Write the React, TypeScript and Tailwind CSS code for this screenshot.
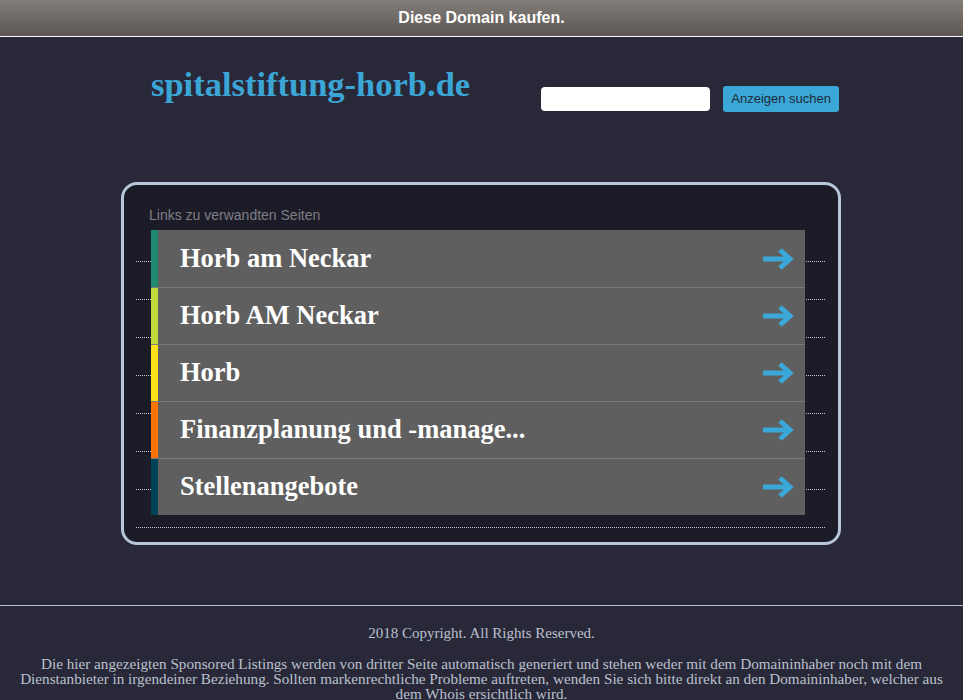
const links = [
  { label: 'Horb am Neckar', color: 'bg-[#1f8a70]' },
  { label: 'Horb AM Neckar', color: 'bg-[#bedb39]' },
  { label: 'Horb', color: 'bg-[#ffe11a]' },
  { label: 'Finanzplanung und -manage...', color: 'bg-[#fd7400]' },
  { label: 'Stellenangebote', color: 'bg-[#004358]' },
];

const Arrow = () => (
  <svg width="32" height="24" viewBox="0 0 32 24" className="shrink-0">
    <path d="M1 12 H27" stroke="#3aa8d8" strokeWidth="5" fill="none" />
    <path d="M18 3 L28 12 L18 21" stroke="#3aa8d8" strokeWidth="5" fill="none" strokeLinejoin="miter" />
  </svg>
);

export default function App() {
  return (
    <div className="min-h-[700px] bg-[#292839] font-['Liberation_Sans',Arial,sans-serif]">
      {/* Top bar */}
      <div className="h-[36px] bg-gradient-to-b from-[#837e79] to-[#5c5752] flex items-center justify-center border-b border-white box-content">
        <span className="text-white font-bold text-[16px]">Diese Domain kaufen.</span>
      </div>

      {/* Header */}
      <div className="w-[720px] ml-[121px] flex justify-between">
        <h1 className="pl-[30px] pt-[27px] text-[34.5px] leading-[40px] font-bold text-[#3ba6d6] font-['Liberation_Serif',serif]">
          spitalstiftung-horb.de
        </h1>
        <div className="flex items-center gap-[13px] pt-[49px] pr-[2px] self-start">
          <input type="text" className="w-[169px] h-[24px] bg-white rounded-[4px] outline-none" />
          <button className="h-[26px] px-[8px] bg-[#3aa7d6] rounded-[3px] text-[13px] text-[#1d2b38]">
            Anzeigen suchen
          </button>
        </div>
      </div>

      {/* Related links box */}
      <div className="w-[720px] ml-[121px] mt-[70px] h-[363px] border-[3px] border-[#b5c7d8] rounded-[16px] bg-[#1c1c28]">
        <div className="pl-[25px] pt-[22px] text-[14px] leading-[16px] text-[#7f7f85]">Links zu verwandten Seiten</div>
        <div className="ml-[12px] mr-[13px] mt-[1px] grid">
          <div className="[grid-area:1/1] flex flex-col">
            {Array.from({ length: 8 }).map((_, i) => (
              <div key={i} className="h-[38px] border-b border-dotted border-[#c8c8d0]" />
            ))}
          </div>
          <div className="[grid-area:1/1] ml-[15px] mr-[20px] mt-[6px] self-start">
            {links.map((l, i) => (
              <a
                key={l.label}
                href="#"
                className={`flex h-[57px] bg-[#5f5f5f] ${i > 0 ? 'border-t border-[#7a7a7a]' : ''}`}
              >
                <span className={`w-[7px] ${l.color}`} />
                <span className="flex-1 flex items-center justify-between pl-[22px] pr-[11px]">
                  <span className="text-white font-bold text-[26.5px] font-['Liberation_Serif',serif]">{l.label}</span>
                  <Arrow />
                </span>
              </a>
            ))}
          </div>
        </div>
      </div>

      {/* Footer */}
      <div className="mt-[60px] border-t border-[#b8c3d2] text-center text-[#b9c1cd] font-['Liberation_Serif',serif] leading-[15px]">
        <p className="pt-[20px] text-[15px]">2018 Copyright. All Rights Reserved.</p>
        <p className="pt-[15px] px-[10px] text-[15.2px]">
          Die hier angezeigten Sponsored Listings werden von dritter Seite automatisch generiert und stehen weder mit dem Domaininhaber noch mit dem Dienstanbieter in irgendeiner Beziehung. Sollten markenrechtliche Probleme auftreten, wenden Sie sich bitte direkt an den Domaininhaber, welcher aus dem Whois ersichtlich wird.
        </p>
      </div>
    </div>
  );
}
